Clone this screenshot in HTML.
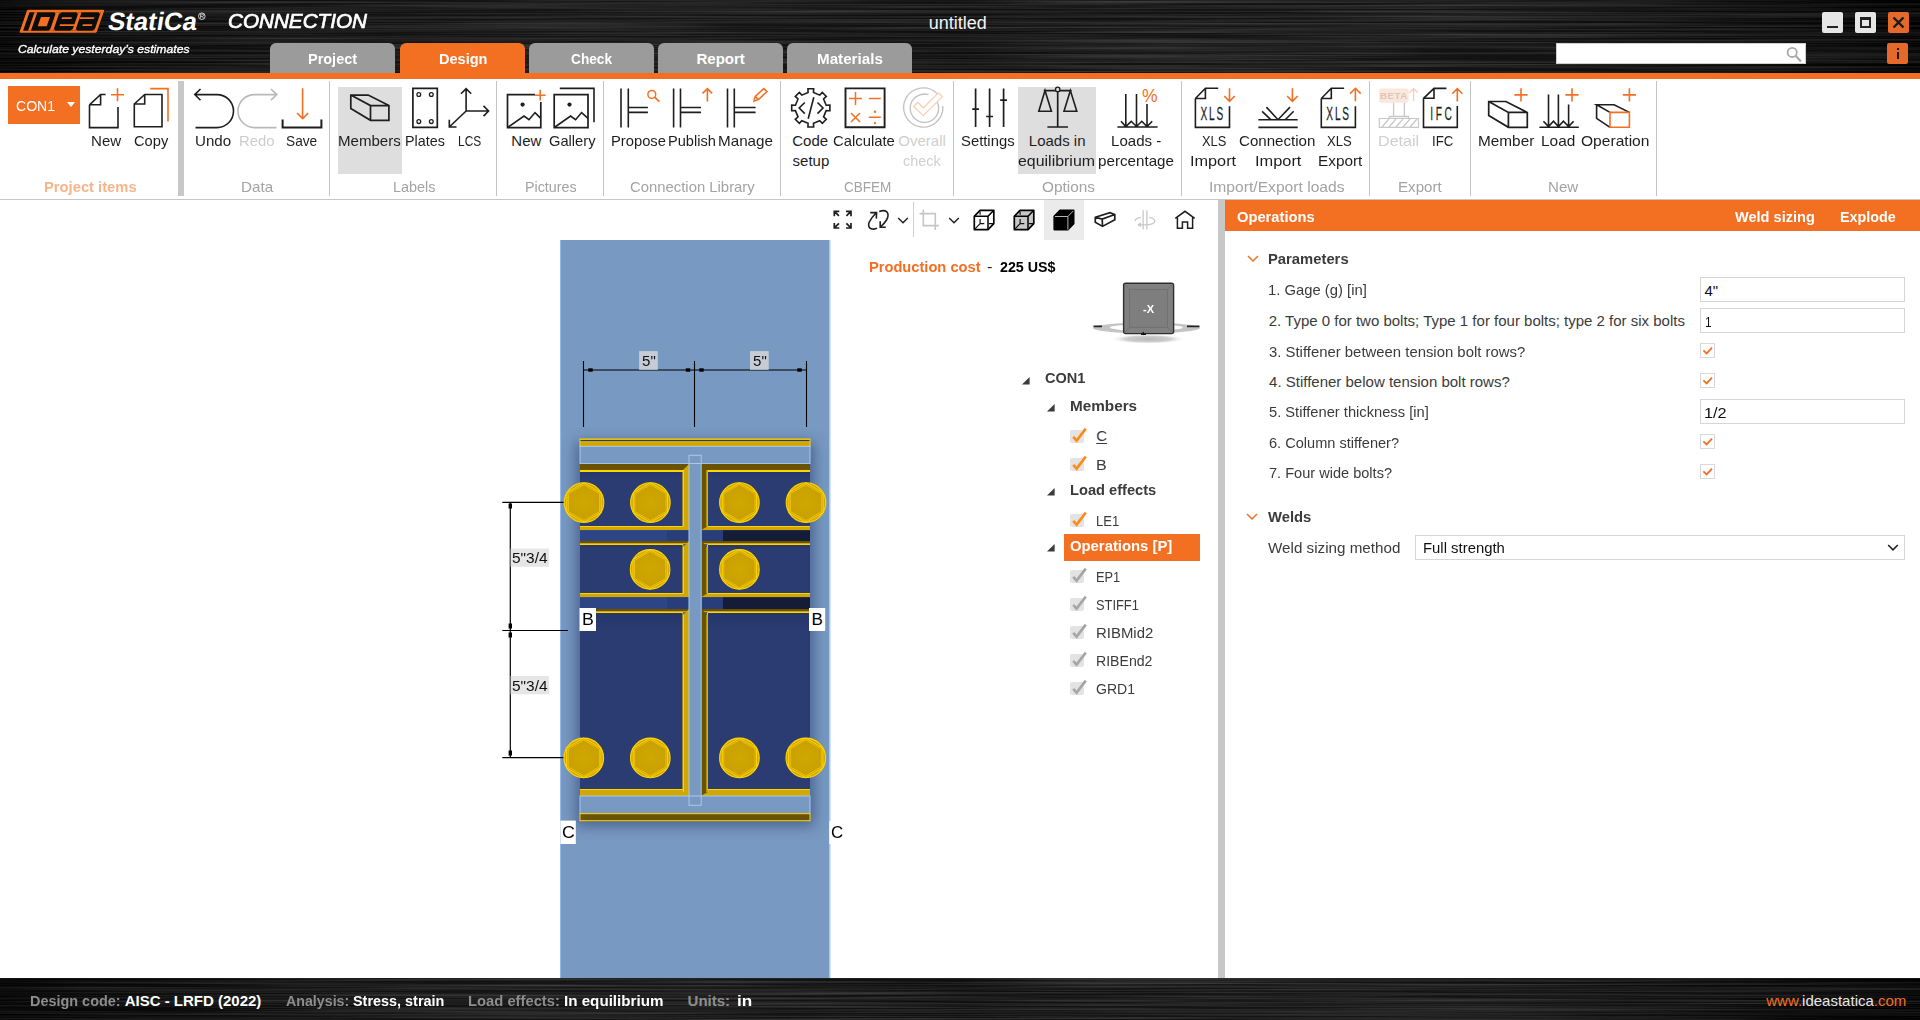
<!DOCTYPE html>
<html><head><meta charset="utf-8"><title>IDEA StatiCa Connection</title><style>
*{margin:0;padding:0;box-sizing:content-box}
html,body{width:1920px;height:1020px;overflow:hidden;background:#fff;font-family:"Liberation Sans",sans-serif;}
.a{position:absolute;display:block}
.t{position:absolute;white-space:nowrap;line-height:1;font-family:"Liberation Sans",sans-serif;}
</style></head><body>
<svg class="a" style="left:0px;top:0px;" width="1920" height="73" viewBox="0 0 1920 73"><defs><filter id="bh" x="0" y="0" width="1920" height="73" filterUnits="userSpaceOnUse" color-interpolation-filters="sRGB"><feTurbulence type="fractalNoise" baseFrequency="0.003 0.55" numOctaves="3" seed="3" result="n"/><feColorMatrix in="n" type="matrix" values="0.34 0 0 0 -0.11  0.34 0 0 0 -0.11  0.34 0 0 0 -0.11  0 0 0 0 1"/></filter><linearGradient id="bhg" x1="0" y1="0" x2="1" y2="0"><stop offset="0" stop-color="#000" stop-opacity="0.25"/><stop offset="0.5" stop-color="#fff" stop-opacity="0.05"/><stop offset="1" stop-color="#000" stop-opacity="0.25"/></linearGradient></defs><rect x="0" y="0" width="1920" height="73" fill="#111"/><rect x="0" y="0" width="1920" height="73" filter="url(#bh)"/><rect x="0" y="0" width="1920" height="73" fill="url(#bhg)"/></svg>
<svg class="a" style="left:0px;top:0px;" width="120" height="40" viewBox="0 0 120 40"><g transform="translate(0,32.8) skewX(-19.03) translate(0,-32.8)" fill="#f36f22">
      <rect x="19.3" y="9.8" width="77.2" height="23" rx="1.2"/>
      <rect x="22.4" y="12.2" width="71.2" height="18.5" fill="#0c0c0c" rx="0.5"/>
      <rect x="27.4" y="12.2" width="2.8" height="18.5"/>
      <rect x="35.5" y="16.9" width="9" height="9.4"/>
      <rect x="49" y="12.2" width="3.5" height="18.5"/>
      <path d="M47.5 12.2 L49.5 12.2 L49.5 14.2 Z M47.5 30.7 L49.5 30.7 L49.5 28.7 Z M52.5 12.2 L54.5 12.2 L52.5 14.2 Z M52.5 30.7 L54.5 30.7 L52.5 28.7 Z"/>
      <rect x="56.7" y="17.2" width="9.9" height="1.8"/>
      <rect x="57.1" y="24.2" width="15" height="1.8"/>
      <rect x="71.5" y="12.2" width="3" height="18.5"/>
      <path d="M69.5 12.2 L71.5 12.2 L71.5 14.2 Z M69.5 30.7 L71.5 30.7 L71.5 28.7 Z M74.5 30.7 L76.5 30.7 L74.5 28.7 Z M91.6 12.2 L93.6 12.2 L93.6 14.2 Z M91.6 30.7 L93.6 30.7 L93.6 28.7 Z"/>
      <rect x="74.5" y="17.2" width="14.5" height="1.8"/>
      <rect x="80" y="24.2" width="9.4" height="1.8"/>
    </g></svg>
<div class="t" style="left:107.23px;top:8.88px;font-size:25.2px;color:#fff;font-weight:700;transform:scaleX(1.0219) skewX(-9deg);transform-origin:0 21.42px;">StatiCa</div>
<svg class="a" style="left:196px;top:10px;" width="12" height="12" viewBox="196 10 12 12"><circle cx="201.8" cy="16.2" r="3.3" fill="none" stroke="#e0e0e0" stroke-width="0.9"/><path d="M200.6 18.3 L200.6 14.2 L202.4 14.2 Q203.6 14.2 203.6 15.3 Q203.6 16.3 202.4 16.3 L200.6 16.3 M202.2 16.3 L203.6 18.3" fill="none" stroke="#e0e0e0" stroke-width="0.8"/></svg>
<div class="t" style="left:227.86px;top:11.54px;font-size:19.6px;color:#fff;font-style:italic;transform:scaleX(1.0548);transform-origin:0 16.66px;-webkit-text-stroke:0.7px #fff;">CONNECTION</div>
<div class="t" style="left:18.33px;top:43.83px;font-size:11.5px;color:#fff;font-style:italic;transform:scaleX(1.0625);transform-origin:0 9.78px;-webkit-text-stroke:0.35px #fff;">Calculate yesterday’s estimates</div>
<div class="t" style="left:957.8px;top:13.6px;font-size:18px;color:#f2f2f2;transform:translateX(-50%);">untitled</div>
<div class="a" style="left:270px;top:43px;width:125px;height:30px;background:#9b9b9b;border-radius:6px 6px 0 0;"></div>
<div class="t" style="left:307.66px;top:51.35px;font-size:15px;color:#fff;font-weight:700;transform:scaleX(0.9648);transform-origin:0 12.75px;">Project</div>
<div class="a" style="left:400px;top:43px;width:125px;height:30px;background:#f36f22;border-radius:6px 6px 0 0;"></div>
<div class="t" style="left:438.76px;top:51.35px;font-size:15px;color:#fff;font-weight:700;transform:scaleX(0.9678);transform-origin:0 12.75px;">Design</div>
<div class="a" style="left:529px;top:43px;width:125px;height:30px;background:#9b9b9b;border-radius:6px 6px 0 0;"></div>
<div class="t" style="left:570.70px;top:51.35px;font-size:15px;color:#fff;font-weight:700;transform:scaleX(0.9122);transform-origin:0 12.75px;">Check</div>
<div class="a" style="left:658px;top:43px;width:125px;height:30px;background:#9b9b9b;border-radius:6px 6px 0 0;"></div>
<div class="t" style="left:696.53px;top:51.35px;font-size:15px;color:#fff;font-weight:700;">Report</div>
<div class="a" style="left:787px;top:43px;width:125px;height:30px;background:#9b9b9b;border-radius:6px 6px 0 0;"></div>
<div class="t" style="left:816.51px;top:51.35px;font-size:15px;color:#fff;font-weight:700;transform:scaleX(1.0126);transform-origin:0 12.75px;">Materials</div>
<div class="a" style="left:1822px;top:12px;width:21px;height:21px;background:#e6e6e6;border-radius:2px;"></div>
<div class="a" style="left:1827px;top:26px;width:11px;height:2px;background:#222;"></div>
<div class="a" style="left:1855px;top:12px;width:21px;height:21px;background:#e6e6e6;border-radius:2px;"></div>
<div class="a" style="left:1860px;top:17px;width:11px;height:11px;background:transparent;box-sizing:border-box;border:2px solid #222;border-top-width:3px;"></div>
<div class="a" style="left:1888px;top:12px;width:21px;height:21px;background:#e5692a;border-radius:2px;"></div>
<svg class="a" style="left:1888px;top:12px;" width="21" height="21" viewBox="1888 12 21 21"><path d="M1893.5 17.5 L1903.5 27.5 M1903.5 17.5 L1893.5 27.5" stroke="#1a1a1a" stroke-width="2.4"/></svg>
<div class="a" style="left:1556px;top:43px;width:250px;height:21px;background:#fff;box-sizing:border-box;border:1px solid #cfcfcf;"></div>
<svg class="a" style="left:1782px;top:44px;" width="22" height="20" viewBox="1782 44 22 20"><circle cx="1792.2" cy="52.4" r="4.6" fill="none" stroke="#aaa" stroke-width="1.8"/><path d="M1795.6 55.8 L1801 61.5" stroke="#aaa" stroke-width="2.2"/></svg>
<div class="a" style="left:1887px;top:43px;width:21px;height:21px;background:#e5692a;border-radius:2px;"></div>
<div class="a" style="left:1896.5px;top:48px;width:2.2px;height:2.2px;background:#1a1a1a;"></div>
<div class="a" style="left:1896.5px;top:51.5px;width:2.2px;height:7.5px;background:#1a1a1a;"></div>
<div class="a" style="left:0px;top:73px;width:1920px;height:6px;background:#f36f22;"></div>
<div class="a" style="left:0px;top:79px;width:1920px;height:120px;background:#fff;"></div>
<div class="a" style="left:0px;top:199px;width:1920px;height:1px;background:#c6c6c6;"></div>
<div class="a" style="left:178px;top:81px;width:6px;height:115px;background:#c8c8c8;"></div>
<div class="a" style="left:329px;top:81px;width:1px;height:115px;background:#c4c4c4;"></div>
<div class="a" style="left:496px;top:81px;width:1px;height:115px;background:#c4c4c4;"></div>
<div class="a" style="left:603px;top:81px;width:1px;height:115px;background:#c4c4c4;"></div>
<div class="a" style="left:780px;top:81px;width:1px;height:115px;background:#c4c4c4;"></div>
<div class="a" style="left:953px;top:81px;width:1px;height:115px;background:#c4c4c4;"></div>
<div class="a" style="left:1181px;top:81px;width:1px;height:115px;background:#c4c4c4;"></div>
<div class="a" style="left:1369px;top:81px;width:1px;height:115px;background:#c4c4c4;"></div>
<div class="a" style="left:1470px;top:81px;width:1px;height:115px;background:#c4c4c4;"></div>
<div class="a" style="left:1656px;top:81px;width:1px;height:115px;background:#c4c4c4;"></div>
<div class="a" style="left:338px;top:87px;width:64px;height:87px;background:#dedede;"></div>
<div class="a" style="left:1018px;top:87px;width:78px;height:87px;background:#dedede;"></div>
<div class="a" style="left:8px;top:86px;width:72px;height:38px;background:#f36f22;"></div>
<div class="t" style="left:15.60px;top:97.55px;font-size:15px;color:#fff;transform:scaleX(0.9378);transform-origin:0 12.75px;">CON1</div>
<svg class="a" style="left:66px;top:100px;" width="10" height="8" viewBox="66 100 10 8"><path d="M67 102 L75 102 L71 107 Z" fill="#fff"/></svg>
<div class="t" style="left:91.49px;top:132.85px;font-size:15px;color:#1e1e1e;transform:scaleX(1.0043);transform-origin:0 12.75px;">New</div>
<div class="t" style="left:133.77px;top:132.85px;font-size:15px;color:#1e1e1e;transform:scaleX(0.9774);transform-origin:0 12.75px;">Copy</div>
<div class="t" style="left:195.47px;top:132.85px;font-size:15px;color:#1e1e1e;transform:scaleX(1.0081);transform-origin:0 12.75px;">Undo</div>
<div class="t" style="left:239.41px;top:132.85px;font-size:15px;color:#cdcdcd;transform:scaleX(0.9897);transform-origin:0 12.75px;">Redo</div>
<div class="t" style="left:285.78px;top:132.85px;font-size:15px;color:#1e1e1e;transform:scaleX(0.9132);transform-origin:0 12.75px;">Save</div>
<div class="t" style="left:338.39px;top:132.85px;font-size:15px;color:#1e1e1e;transform:scaleX(1.0045);transform-origin:0 12.75px;">Members</div>
<div class="t" style="left:405.35px;top:132.85px;font-size:15px;color:#1e1e1e;transform:scaleX(0.9556);transform-origin:0 12.75px;">Plates</div>
<div class="t" style="left:457.75px;top:132.85px;font-size:15px;color:#1e1e1e;transform:scaleX(0.7949);transform-origin:0 12.75px;">LCS</div>
<div class="t" style="left:511.30px;top:132.85px;font-size:15px;color:#1e1e1e;">New</div>
<div class="t" style="left:549.27px;top:132.85px;font-size:15px;color:#1e1e1e;transform:scaleX(0.9786);transform-origin:0 12.75px;">Gallery</div>
<div class="t" style="left:611.22px;top:132.85px;font-size:15px;color:#1e1e1e;transform:scaleX(0.9833);transform-origin:0 12.75px;">Propose</div>
<div class="t" style="left:668.23px;top:132.85px;font-size:15px;color:#1e1e1e;transform:scaleX(0.9740);transform-origin:0 12.75px;">Publish</div>
<div class="t" style="left:718.38px;top:132.85px;font-size:15px;color:#1e1e1e;transform:scaleX(1.0143);transform-origin:0 12.75px;">Manage</div>
<div class="t" style="left:792.25px;top:132.85px;font-size:15px;color:#1e1e1e;">Code</div>
<div class="t" style="left:792.55px;top:152.65px;font-size:15px;color:#1e1e1e;">setup</div>
<div class="t" style="left:833.26px;top:132.85px;font-size:15px;color:#1e1e1e;transform:scaleX(0.9881);transform-origin:0 12.75px;">Calculate</div>
<div class="t" style="left:898.32px;top:132.85px;font-size:15px;color:#cfcfcf;">Overall</div>
<div class="t" style="left:903.42px;top:152.65px;font-size:15px;color:#cfcfcf;transform:scaleX(0.9598);transform-origin:0 12.75px;">check</div>
<div class="t" style="left:961.33px;top:132.85px;font-size:15px;color:#1e1e1e;transform:scaleX(0.9882);transform-origin:0 12.75px;">Settings</div>
<div class="t" style="left:1028.80px;top:132.85px;font-size:15px;color:#1e1e1e;">Loads in</div>
<div class="t" style="left:1018.36px;top:152.65px;font-size:15px;color:#1e1e1e;transform:scaleX(1.0616);transform-origin:0 12.75px;">equilibrium</div>
<div class="t" style="left:1110.79px;top:132.85px;font-size:15px;color:#1e1e1e;transform:scaleX(1.0057);transform-origin:0 12.75px;">Loads -</div>
<div class="t" style="left:1098.01px;top:152.65px;font-size:15px;color:#1e1e1e;transform:scaleX(1.0119);transform-origin:0 12.75px;">percentage</div>
<div class="t" style="left:1201.68px;top:132.85px;font-size:15px;color:#1e1e1e;transform:scaleX(0.8571);transform-origin:0 12.75px;">XLS</div>
<div class="t" style="left:1190.44px;top:152.65px;font-size:15px;color:#1e1e1e;transform:scaleX(1.0847);transform-origin:0 12.75px;">Import</div>
<div class="t" style="left:1239.24px;top:132.85px;font-size:15px;color:#1e1e1e;transform:scaleX(1.0071);transform-origin:0 12.75px;">Connection</div>
<div class="t" style="left:1254.53px;top:152.65px;font-size:15px;color:#1e1e1e;transform:scaleX(1.0920);transform-origin:0 12.75px;">Import</div>
<div class="t" style="left:1327.37px;top:132.85px;font-size:15px;color:#1e1e1e;transform:scaleX(0.8718);transform-origin:0 12.75px;">XLS</div>
<div class="t" style="left:1317.77px;top:152.65px;font-size:15px;color:#1e1e1e;transform:scaleX(1.0238);transform-origin:0 12.75px;">Export</div>
<div class="t" style="left:1378.21px;top:132.85px;font-size:15px;color:#cfcfcf;transform:scaleX(1.0733);transform-origin:0 12.75px;">Detail</div>
<div class="t" style="left:1431.81px;top:132.85px;font-size:15px;color:#1e1e1e;transform:scaleX(0.8844);transform-origin:0 12.75px;">IFC</div>
<div class="t" style="left:1478.37px;top:132.85px;font-size:15px;color:#1e1e1e;transform:scaleX(1.0233);transform-origin:0 12.75px;">Member</div>
<div class="t" style="left:1541.07px;top:132.85px;font-size:15px;color:#1e1e1e;transform:scaleX(1.0288);transform-origin:0 12.75px;">Load</div>
<div class="t" style="left:1581.30px;top:132.85px;font-size:15px;color:#1e1e1e;transform:scaleX(1.0389);transform-origin:0 12.75px;">Operation</div>
<div class="t" style="left:43.64px;top:178.65px;font-size:15px;color:#f6b48a;font-weight:700;transform:scaleX(0.9835);transform-origin:0 12.75px;">Project items</div>
<div class="t" style="left:241.28px;top:178.65px;font-size:15px;color:#a3a3a3;transform:scaleX(1.0148);transform-origin:0 12.75px;">Data</div>
<div class="t" style="left:392.55px;top:178.65px;font-size:15px;color:#a3a3a3;transform:scaleX(0.9611);transform-origin:0 12.75px;">Labels</div>
<div class="t" style="left:524.86px;top:178.65px;font-size:15px;color:#a3a3a3;transform:scaleX(0.9537);transform-origin:0 12.75px;">Pictures</div>
<div class="t" style="left:630.26px;top:178.65px;font-size:15px;color:#a3a3a3;transform:scaleX(0.9906);transform-origin:0 12.75px;">Connection Library</div>
<div class="t" style="left:844.32px;top:178.65px;font-size:15px;color:#a3a3a3;transform:scaleX(0.9014);transform-origin:0 12.75px;">CBFEM</div>
<div class="t" style="left:1041.61px;top:178.65px;font-size:15px;color:#a3a3a3;transform:scaleX(1.0243);transform-origin:0 12.75px;">Options</div>
<div class="t" style="left:1208.59px;top:178.65px;font-size:15px;color:#a3a3a3;transform:scaleX(1.0423);transform-origin:0 12.75px;">Import/Export loads</div>
<div class="t" style="left:1398.19px;top:178.65px;font-size:15px;color:#a3a3a3;transform:scaleX(1.0071);transform-origin:0 12.75px;">Export</div>
<div class="t" style="left:1548.39px;top:178.65px;font-size:15px;color:#a3a3a3;transform:scaleX(1.0078);transform-origin:0 12.75px;">New</div>
<svg class="a" style="left:0px;top:79px;" width="1920" height="60" viewBox="0 79 1920 60"><path d="M89.5 104.8 L100.6 94.5 L105.6 94.5 M89.5 104.8 L89.5 127.6 L118 127.6 L118 107 M89.5 104.8 L100.6 104.8 L100.6 94.5" fill="none" stroke="#1e1e1e" stroke-width="1.6" /><path d="M111 94.8 L124 94.8 M117.5 88.3 L117.5 101.3" fill="none" stroke="#f36f22" stroke-width="1.6" /><path d="M134.3 104 L144.7 94.5 L162 94.5 L162 126.8 L134.3 126.8 Z M134.3 104 L144.7 104 L144.7 94.5" fill="none" stroke="#1e1e1e" stroke-width="1.6" /><path d="M150.2 88.6 L168 88.6 L168 121.6" fill="none" stroke="#f36f22" stroke-width="1.6" /><path d="M194.8 94.6 L217 94.6 A16.5 16.5 0 0 1 217 127.6 L195.5 127.6 M200.5 89 L194.8 94.6 L200.5 100.2" fill="none" stroke="#1e1e1e" stroke-width="1.6" /><path d="M276.8 94.6 L254.5 94.6 A16.5 16.5 0 0 0 254.5 127.6 L276.5 127.6 M271 89 L276.8 94.6 L271 100.2" fill="none" stroke="#b9b9b9" stroke-width="1.6" /><path d="M302.6 88.2 L302.6 118.6 M297 113 L302.6 118.6 L308.2 113" fill="none" stroke="#f36f22" stroke-width="1.6" /><path d="M282.6 119.5 L282.6 127.5 L321.4 127.5 L321.4 119.5" fill="none" stroke="#1e1e1e" stroke-width="2" /><path d="M350.8 95.1 L368.2 95.1 L388.9 105.6 L388.9 120.3 L370.5 120.3 L350.8 108.5 Z M350.8 95.1 L370.5 105.6 L388.9 105.6 M370.5 105.6 L370.5 120.3" fill="none" stroke="#1e1e1e" stroke-width="1.7" /><path d="M412.9 88.4 L437.3 88.4 L437.3 127.4 L412.9 127.4 Z" fill="none" stroke="#1e1e1e" stroke-width="1.7" /><circle cx="418.8" cy="94.5" r="1.9" fill="none" stroke="#1e1e1e" stroke-width="1.3"/><circle cx="418.8" cy="121.6" r="1.9" fill="none" stroke="#1e1e1e" stroke-width="1.3"/><circle cx="431.3" cy="94.5" r="1.9" fill="none" stroke="#1e1e1e" stroke-width="1.3"/><circle cx="431.3" cy="121.6" r="1.9" fill="none" stroke="#1e1e1e" stroke-width="1.3"/><path d="M466.1 111 L466.1 88.6 M461 93.7 L466.1 88.6 L471.2 93.7 M466.1 111 L488.6 111 M483.5 105.9 L488.6 111 L483.5 116.1 M466.1 111 L449.3 127 M449.3 119.8 L449.3 127 L456.5 127" fill="none" stroke="#1e1e1e" stroke-width="1.6" /><path d="M535 94.6 L507.5 94.6 L507.5 127.6 L540.8 127.6 L540.8 102" fill="none" stroke="#1e1e1e" stroke-width="1.7" /><path d="M534.8 95.2 L545.6 95.2 M540.2 89.8 L540.2 100.6" fill="none" stroke="#f36f22" stroke-width="1.6" /><circle cx="522.6" cy="104.6" r="2.1" fill="#1e1e1e"/><path d="M508.2 127 L524 116 L529 119.7 L535 112.6 L540.8 118.4" fill="none" stroke="#1e1e1e" stroke-width="1.6" /><path d="M559.8 88.4 L594 88.4 L594 122.2" fill="none" stroke="#1e1e1e" stroke-width="1.6" /><path d="M554.2 94.6 L588 94.6 L588 127.6 L554.2 127.6 Z" fill="none" stroke="#1e1e1e" stroke-width="1.7" /><circle cx="569.5" cy="104.6" r="2.1" fill="#1e1e1e"/><path d="M555 127 L570.6 116 L575.6 119.7 L581.6 112.6 L588 118.4" fill="none" stroke="#1e1e1e" stroke-width="1.6" /><path d="M621 88.4 L621 127.6 M628.3 88.4 L628.3 127.6 M628.3 107.5 L647.9 107.5 M628.3 112.4 L647.9 112.4" fill="none" stroke="#1e1e1e" stroke-width="1.6" /><path d="M673.6 88.4 L673.6 127.6 M680.5 88.4 L680.5 127.6 M680.5 107.5 L701 107.5 M680.5 112.4 L701 112.4" fill="none" stroke="#1e1e1e" stroke-width="1.6" /><path d="M727.5 88.4 L727.5 127.6 M734.3 88.4 L734.3 127.6 M734.3 107.5 L755.6 107.5 M734.3 112.4 L755.6 112.4" fill="none" stroke="#1e1e1e" stroke-width="1.6" /><circle cx="651.8" cy="94.4" r="3.9" fill="none" stroke="#f36f22" stroke-width="1.5"/><path d="M654.6 97.2 L659.4 101.6" fill="none" stroke="#f36f22" stroke-width="1.7" /><path d="M707.4 101.6 L707.4 88.6 M702.6 93.4 L707.4 88.6 L712.2 93.4" fill="none" stroke="#f36f22" stroke-width="1.6" /><path d="M754 101 L755.2 96.4 L763.8 88.6 L767 91.6 L758.4 99.6 Z M755.2 96.4 L758.4 99.6" fill="none" stroke="#f36f22" stroke-width="1.5" /><path d="M808.09 92.54 L807.95 88.81 L813.65 88.81 L813.51 92.54 L819.75 95.12 L822.28 92.39 L826.31 96.42 L823.58 98.95 L826.16 105.19 L829.89 105.05 L829.89 110.75 L826.16 110.61 L823.58 116.85 L826.31 119.38 L822.28 123.41 L819.75 120.68 L813.51 123.26 L813.65 126.99 L807.95 126.99 L808.09 123.26 L801.85 120.68 L799.32 123.41 L795.29 119.38 L798.02 116.85 L795.44 110.61 L791.71 110.75 L791.71 105.05 L795.44 105.19 L798.02 98.95 L795.29 96.42 L799.32 92.39 L801.85 95.12 Z" fill="none" stroke="#1e1e1e" stroke-width="1.6" /><path d="M804.8 102.5 L799.2 108 L804.8 113.6 M813.8 97.3 L808.2 118.8 M817.5 102.5 L823 108 L817.5 113.6" fill="none" stroke="#1e1e1e" stroke-width="1.6" /><path d="M845.5 88.4 L884.6 88.4 L884.6 127.3 L845.5 127.3 Z" fill="none" stroke="#1e1e1e" stroke-width="1.9" /><path d="M849 98.6 L862 98.6 M855.5 92.1 L855.5 105.1 M868.8 98.6 L880.8 98.6 M851 113 L860 122 M860 113 L851 122 M868.8 117.3 L880.8 117.3" fill="none" stroke="#f36f22" stroke-width="1.5" /><circle cx="875" cy="111.7" r="1.2" fill="#f36f22"/><circle cx="875" cy="123.1" r="1.2" fill="#f36f22"/><path d="M937 93.5 A19.6 19.6 0 1 0 942.8 106" fill="none" stroke="#c4c4c4" stroke-width="1.4"/><path d="M928.5 94.6 A14.2 14.2 0 1 0 937.2 102" fill="none" stroke="#c4c4c4" stroke-width="1.4"/><path d="M913.5 106.4 L917.8 102.5 L923.3 107.8 L938.4 92.8 L942.3 96.6 L923.3 115.6 Z" fill="none" stroke="#f8cfb5" stroke-width="1.3"/><path d="M975.6 88.6 L975.6 127 M989.6 88.6 L989.6 127 M1003.6 88.6 L1003.6 127 M972.2 109.2 L979 109.2 M986.2 116.5 L993 116.5 M1000.2 100.2 L1007 100.2" fill="none" stroke="#1e1e1e" stroke-width="1.7" /><path d="M1057.7 90.4 L1057.7 127 M1047.4 127 L1068 127 M1043.8 90.6 L1071.6 90.6" fill="none" stroke="#1e1e1e" stroke-width="1.7" /><circle cx="1057.7" cy="89.4" r="2.2" fill="#dedede" stroke="#1e1e1e" stroke-width="1.3"/><path d="M1045 90.6 L1038.8 111.2 L1051.4 111.2 Z M1070.4 90.6 L1064 111.2 L1076.8 111.2 Z" fill="none" stroke="#1e1e1e" stroke-width="1.6" /><path d="M1117.4 127 L1157.6 127 M1125.8 94 L1125.8 127 M1136.5 94 L1136.5 127 M1147 104 L1147 127 M1121 121.3 L1125.8 126.5 L1131.2 121.3 L1136.5 126.5 L1141.8 121.3 L1147 126.5 L1152.2 121.3" fill="none" stroke="#1e1e1e" stroke-width="1.6" /><text x="1149.8" y="101.6" font-size="17.5" font-family="Liberation Sans" fill="#f36f22" text-anchor="middle">%</text><path d="M1195.4 98.5 L1205.4 88.3 L1218.2 88.3 M1195.4 98.5 L1195.4 127.4 L1229.5 127.4 L1229.5 106.2 M1195.4 98.5 L1205.4 98.5 L1205.4 88.3" fill="none" stroke="#1e1e1e" stroke-width="1.6" /><text x="1213.0" y="120.3" font-size="18" font-family="Liberation Sans" fill="#1e1e1e" text-anchor="middle" transform="translate(1212.5,0) scale(0.56,1) translate(-1212.5,0)" letter-spacing="3.2" stroke="#1e1e1e" stroke-width="0.25">XLS</text><path d="M1229.5 88.3 L1229.5 101.3 M1224.2 96 L1229.5 101.3 L1234.8 96" fill="none" stroke="#f36f22" stroke-width="1.6" /><path d="M1321.3 98.5 L1331.3 88.3 L1344.1 88.3 M1321.3 98.5 L1321.3 127.4 L1355.4 127.4 L1355.4 106.2 M1321.3 98.5 L1331.3 98.5 L1331.3 88.3" fill="none" stroke="#1e1e1e" stroke-width="1.6" /><text x="1338.8" y="120.3" font-size="18" font-family="Liberation Sans" fill="#1e1e1e" text-anchor="middle" transform="translate(1338.3,0) scale(0.56,1) translate(-1338.3,0)" letter-spacing="3.2" stroke="#1e1e1e" stroke-width="0.25">XLS</text><path d="M1355.4 101.3 L1355.4 88.3 M1350.1 93.6 L1355.4 88.3 L1360.7 93.6" fill="none" stroke="#f36f22" stroke-width="1.6" /><path d="M1258.4 119.7 L1297.7 119.7 M1258.4 127.4 L1297.7 127.4 M1262.1 111.3 L1270.8 119.7 M1266.4 107.1 L1278 119.7 L1290 107.1 M1285.2 119.7 L1293.7 111.3" fill="none" stroke="#1e1e1e" stroke-width="1.6" /><path d="M1292.4 88.3 L1292.4 101.3 M1287.1 96 L1292.4 101.3 L1297.7 96" fill="none" stroke="#f36f22" stroke-width="1.6" /><rect x="1379" y="88.4" width="29.7" height="14.3" rx="2.5" fill="#fbe8dc"/><text x="1393.9" y="99.4" font-size="9.6" font-weight="700" font-family="Liberation Sans" fill="#dcc6b8" text-anchor="middle" letter-spacing="0.6">BETA</text><path d="M1413.6 101.3 L1413.6 88.6 M1409.4 92.8 L1413.6 88.6 L1417.8 92.8" fill="none" stroke="#f8cdb3" stroke-width="1.3" /><path d="M1393.6 102.7 L1393.6 116 M1404.4 102.7 L1404.4 116 M1389.2 116.5 L1408.5 116.5 L1408.5 118.3 M1389.2 116.5 L1389.2 118.3" fill="none" stroke="#c8c8c8" stroke-width="1.3" /><path d="M1379.3 118.5 L1418.5 118.5 L1418.5 127.4 L1379.3 127.4 Z M1382 127 L1389 119 M1389 127 L1396 119 M1396 127 L1403 119 M1403 127 L1410 119 M1410 127 L1417 119" fill="none" stroke="#c8c8c8" stroke-width="1.2" /><path d="M1423.5 98.3 L1434 88.4 L1446.4 88.4 M1423.5 98.3 L1423.5 127.4 L1457.3 127.4 L1457.3 105.9 M1423.5 98.3 L1434 98.3 L1434 88.4" fill="none" stroke="#1e1e1e" stroke-width="1.6" /><text x="1442.4" y="119.8" font-size="17.5" font-family="Liberation Sans" fill="#1e1e1e" text-anchor="middle" transform="translate(1442.4,0) scale(0.58,1) translate(-1442.4,0)" letter-spacing="4.5" stroke="#1e1e1e" stroke-width="0.25">IFC</text><path d="M1457.3 101.5 L1457.3 88.6 M1452.2 93.7 L1457.3 88.6 L1462.4 93.7" fill="none" stroke="#f36f22" stroke-width="1.6" /><path d="M1488.7 101.5 L1505.9 101.5 L1527.3 112.4 L1527.3 127.3 L1508.4 127.3 L1488.7 115.4 Z M1488.7 101.5 L1508.4 112.4 L1527.3 112.4 M1508.4 112.4 L1508.4 127.3" fill="none" stroke="#1e1e1e" stroke-width="1.7" /><path d="M1514.4 94.9 L1527.6 94.9 M1521 88.3 L1521 101.5" fill="none" stroke="#f36f22" stroke-width="1.6" /><path d="M1539.4 127.3 L1578.8 127.3 M1548.5 94.5 L1548.5 127 M1558.4 94.5 L1558.4 127 M1568.6 104.4 L1568.6 127 M1543.4 121.2 L1548.5 126.6 L1553.5 121.2 L1558.4 126.6 L1563.4 121.2 L1568.6 126.6 L1573.6 121.2" fill="none" stroke="#1e1e1e" stroke-width="1.6" /><path d="M1565.4 94.9 L1578.6 94.9 M1572 88.3 L1572 101.5" fill="none" stroke="#f36f22" stroke-width="1.6" /><path d="M1610 112.4 L1596.6 104.7 L1614.1 104.7 L1629.4 112.4 M1596.6 104.7 L1596.6 118.3 L1610 127.3" fill="none" stroke="#1e1e1e" stroke-width="1.6" /><path d="M1610 112.4 L1629.4 112.4 L1629.4 127.3 L1610 127.3 Z" fill="none" stroke="#f36f22" stroke-width="1.6" /><path d="M1622.8 94.9 L1636 94.9 M1629.4 88.3 L1629.4 101.5" fill="none" stroke="#f36f22" stroke-width="1.6" /></svg>
<svg class="a" style="left:820px;top:200px;" width="400" height="40" viewBox="820 200 400 40"><rect x="1044" y="200" width="40" height="40" fill="#ebebeb"/><path d="M834.3 216.3 L834.3 211.3 L839.3 211.3 M834.6 211.6 L838.9 215.9 M851 216.3 L851 211.3 L846 211.3 M850.7 211.6 L846.4 215.9 M834.3 223 L834.3 228 L839.3 228 M834.6 227.7 L838.9 223.4 M851 223 L851 228 L846 228 M850.7 227.7 L846.4 223.4" fill="none" stroke="#1e1e1e" stroke-width="1.7"/><path d="M876.3 212.8 Q871 218 869 222.5 Q867.5 228 872 229 Q875 229.5 877 228.2 M870.2 212.6 L876.6 212.6 L876.3 218.6" fill="none" stroke="#1e1e1e" stroke-width="1.6"/><path d="M879.2 211.6 Q884 209.5 886.8 211.8 Q889.5 215 886.5 220 Q884 224 880.4 227 M880.2 221.2 L880.2 227.2 L885.8 227.2" fill="none" stroke="#1e1e1e" stroke-width="1.6"/><path d="M898.2 218 L903 222.8 L907.8 218" fill="none" stroke="#1e1e1e" stroke-width="1.4"/><rect x="913" y="202" width="1" height="35" fill="#d0d0d0"/><path d="M919.5 213.6 L935.3 213.6 L935.3 229.9 M923.3 209.6 L923.3 225.6 L939 225.6" fill="none" stroke="#c6c6c6" stroke-width="1.6"/><path d="M949.2 218 L954 222.8 L958.8 218" fill="none" stroke="#1e1e1e" stroke-width="1.4"/><path d="M974.3 216.3 L980.0999999999999 210.3 L993.8 210.3 L993.8 223.60000000000002 L988.0 229.60000000000002 L974.3 229.60000000000002 Z" fill="none" stroke="#000" stroke-width="1.7" stroke-linejoin="round"/><path d="M974.3 216.3 L988.0 216.3 L988.0 229.60000000000002 M988.0 216.3 L993.8 210.3" fill="none" stroke="#000" stroke-width="1.5"/><path d="M980.0999999999999 211.8 L980.0999999999999 214.8 M980.0999999999999 218.9 L980.0999999999999 223.60000000000002 L984.3 223.60000000000002 M988.8 223.60000000000002 L993.8 223.60000000000002 M974.3 229.60000000000002 L980.0999999999999 223.60000000000002" fill="none" stroke="#111" stroke-width="1.2"/><path d="M1014.3 216.3 L1020.0999999999999 210.3 L1033.8 210.3 L1033.8 223.60000000000002 L1028.0 229.60000000000002 L1014.3 229.60000000000002 Z" fill="#c8c8c8" stroke="#000" stroke-width="1.7" stroke-linejoin="round"/><path d="M1014.3 216.3 L1028.0 216.3 L1028.0 229.60000000000002 M1028.0 216.3 L1033.8 210.3" fill="none" stroke="#000" stroke-width="1.5"/><path d="M1020.0999999999999 211.8 L1020.0999999999999 214.8 M1020.0999999999999 218.9 L1020.0999999999999 223.60000000000002 L1024.3 223.60000000000002 M1028.8 223.60000000000002 L1033.8 223.60000000000002 M1014.3 229.60000000000002 L1020.0999999999999 223.60000000000002" fill="none" stroke="#111" stroke-width="1.2"/><path d="M1054.2 216.3 L1060.0 210.3 L1073.7 210.3 L1073.7 223.60000000000002 L1067.9 229.60000000000002 L1054.2 229.60000000000002 Z" fill="#000" stroke="#000" stroke-width="1.6" stroke-linejoin="round"/><path d="M1055.0 216.5 L1067.9 216.5 L1067.9 229.60000000000002 M1067.9 216.5 L1073.3 210.9" fill="none" stroke="#c8c8c8" stroke-width="0.9"/><path d="M1095.3 217.3 L1110 212.6 L1114.8 214.5 L1114.8 219.8 L1102.5 226.4 L1095.3 222.3 Z M1095.3 217.3 L1102.2 219 L1114.8 214.5 M1102.2 219 L1102.5 226.4" fill="none" stroke="#1e1e1e" stroke-width="1.7"/><path d="M1143.1 210.2 L1143.1 229.6 M1146.9 210.2 L1146.9 229.6 M1140.8 217.3 Q1135 218.5 1135 221 M1149.2 217.3 Q1154.8 218.5 1154.8 221 Q1154.8 224.8 1145 224.8 L1138 224.8" fill="none" stroke="#c8c8c8" stroke-width="1.3"/><path d="M1137.3 224.8 L1140.8 222.3 L1140.8 227.3 Z" fill="#c8c8c8"/><path d="M1175.3 218.4 L1185 211.3 L1194.7 218.4 M1177.4 217 L1177.4 228.3 L1182.4 228.3 L1182.4 222 L1187.6 222 L1187.6 228.3 L1192.6 228.3 L1192.6 217" fill="none" stroke="#1e1e1e" stroke-width="1.5"/></svg>
<div class="t" style="left:869.45px;top:259.15px;font-size:15px;color:#f36f22;font-weight:700;transform:scaleX(0.9768);transform-origin:0 12.75px;">Production cost</div>
<div class="t" style="left:987.27px;top:259.15px;font-size:15px;color:#222;transform:scaleX(1.0884);transform-origin:0 12.75px;">-</div>
<div class="t" style="left:999.50px;top:259.15px;font-size:15px;color:#000;font-weight:700;transform:scaleX(0.9514);transform-origin:0 12.75px;">225 US$</div>
<svg class="a" style="left:1085px;top:275px;" width="125" height="75" viewBox="1085 275 125 75">
    <defs><radialGradient id="shd" cx="50%" cy="50%" r="50%"><stop offset="0" stop-color="#b8b8b8"/><stop offset="0.6" stop-color="#cfcfcf"/><stop offset="1" stop-color="#fff" stop-opacity="0"/></radialGradient></defs>
    <ellipse cx="1148" cy="339" rx="38" ry="5" fill="url(#shd)"/>
    <ellipse cx="1146.4" cy="328" rx="53.5" ry="5.3" fill="#c4c4c4"/>
    <ellipse cx="1146.4" cy="327.6" rx="36.5" ry="3.3" fill="#fff"/>
    <path d="M1093.5 326.4 L1102 326.4 M1187 326.4 L1199.5 326.4" stroke="#222" stroke-width="1.6"/>
    <rect x="1123.6" y="283.3" width="50" height="50.3" rx="2" fill="#808080" stroke="#2e2e2e" stroke-width="1.4"/>
    <rect x="1129.6" y="289.3" width="38" height="38" fill="#7e7e7e" stroke="#6e6e6e" stroke-width="0.8"/>
    <path d="M1124.3 284 L1129.6 289.3 M1173 284 L1167.6 289.3 M1124.3 333 L1129.6 327.3 M1173 333 L1167.6 327.3" stroke="#6e6e6e" stroke-width="0.8"/>
    <path d="M1141 334.3 L1146 334.3 M1143 332 L1143.8 335" stroke="#111" stroke-width="1.3"/>
    </svg>
<div class="t" style="left:1143.06px;top:303.95px;font-size:11px;color:#fff;font-weight:700;transform:scaleX(1.0048);transform-origin:0 9.35px;">-X</div>
<svg class="a" style="left:490px;top:240px;" width="370" height="738" viewBox="490 240 370 738"><defs>
      <filter id="blur8" x="-30%" y="-30%" width="160%" height="160%"><feGaussianBlur stdDeviation="7"/></filter>
      <radialGradient id="boltg" cx="50%" cy="50%" r="50%"><stop offset="0" stop-color="#d0a800"/><stop offset="0.85" stop-color="#c9a000"/><stop offset="1" stop-color="#d8b000"/></radialGradient>
      <linearGradient id="panelg" x1="0" y1="0" x2="0" y2="1"><stop offset="0" stop-color="#25366a"/><stop offset="0.12" stop-color="#2a3c71"/><stop offset="1" stop-color="#2a3c71"/></linearGradient>
    </defs><rect x="560" y="240" width="270" height="738" fill="#7899c1"/><rect x="560" y="240" width="1" height="738" fill="#93b9ee"/><rect x="829" y="240" width="1.5" height="738" fill="#a8c8f2"/><rect x="576" y="442" width="238" height="384" fill="#34497a" opacity="0.7" filter="url(#blur8)"/><path d="M583.5 361 L583.5 427 M694.5 361 L694.5 427 M806.5 361 L806.5 427 M583.5 370 L806.5 370" stroke="#000" stroke-width="1.1" fill="none"/><rect x="588.3" y="368.3" width="4.4" height="3.4" fill="#000"/><rect x="685.8" y="368.3" width="4.4" height="3.4" fill="#000"/><rect x="699.3" y="368.3" width="4.4" height="3.4" fill="#000"/><rect x="797.3" y="368.3" width="4.4" height="3.4" fill="#000"/><rect x="639.1" y="351.1" width="18.7" height="18.7" fill="#c5ccd6"/><rect x="750" y="351.1" width="18.7" height="18.7" fill="#c5ccd6"/><path d="M502.3 502.3 L566 502.3 M502.3 630.5 L568 630.5 M502.3 757.6 L566 757.6 M510.3 503 L510.3 757" stroke="#000" stroke-width="1.2" fill="none"/><rect x="508.6" y="503.5" width="3.4" height="5" fill="#000"/><rect x="508.6" y="623.5" width="3.4" height="5" fill="#000"/><rect x="508.6" y="632.5" width="3.4" height="5" fill="#000"/><rect x="508.6" y="750.5" width="3.4" height="5" fill="#000"/><rect x="510.6" y="548.5" width="38.4" height="18.3" fill="#e6e6e6"/><rect x="510.6" y="676" width="38.4" height="18.3" fill="#e6e6e6"/><rect x="580" y="439" width="230" height="7.4" fill="#d2a800" stroke="#ffd400" stroke-width="1"/><rect x="580.5" y="440" width="229" height="1" fill="#283b70"/><rect x="580" y="464" width="1" height="7" fill="#ffd400"/><rect x="580" y="446.4" width="230" height="17.2" fill="#7899c1" stroke="#a9c7ef" stroke-width="1"/><rect x="580" y="464" width="230" height="7" fill="#6a5300"/><rect x="580" y="471" width="103.5" height="55" fill="url(#panelg)"/><rect x="707" y="471" width="103" height="55" fill="url(#panelg)"/><rect x="580" y="544" width="103.5" height="49" fill="url(#panelg)"/><rect x="707" y="544" width="103" height="49" fill="url(#panelg)"/><rect x="580" y="612" width="103.5" height="177" fill="url(#panelg)"/><rect x="707" y="612" width="103" height="177" fill="url(#panelg)"/><rect x="580" y="470" width="230" height="1.2" fill="#d2a800"/><rect x="580" y="470" width="230" height="1" fill="#ffd400"/><rect x="580" y="526" width="230" height="4.2" fill="#d2a800"/><rect x="580" y="526" width="230" height="1" fill="#ffd400"/><rect x="580" y="541" width="230" height="3" fill="#d2a800"/><rect x="580" y="541" width="230" height="1" fill="#ffd400"/><rect x="580" y="593" width="230" height="4.2" fill="#d2a800"/><rect x="580" y="593" width="230" height="1" fill="#ffd400"/><rect x="580" y="609" width="230" height="3" fill="#d2a800"/><rect x="580" y="609" width="230" height="1" fill="#ffd400"/><rect x="580" y="789" width="230" height="7" fill="#d2a800"/><rect x="580" y="789" width="230" height="1" fill="#ffd400"/><rect x="580" y="541" width="230" height="2" fill="#6a5300"/><rect x="580" y="609" width="230" height="2" fill="#6a5300"/><rect x="580" y="530.2" width="87" height="10.799999999999955" fill="#2d4584"/><rect x="667" y="530.2" width="56" height="10.799999999999955" fill="#283e7a"/><rect x="723" y="530.2" width="87" height="10.799999999999955" fill="#151c38"/><rect x="580" y="597.2" width="87" height="11.799999999999955" fill="#2d4584"/><rect x="667" y="597.2" width="56" height="11.799999999999955" fill="#283e7a"/><rect x="723" y="597.2" width="87" height="11.799999999999955" fill="#151c38"/><path d="M580 471.5 L683 471.5 L683 526 M707.5 526 L707.5 471.5 L810 471.5" stroke="#ffd400" stroke-width="1" fill="none"/><path d="M580 544.5 L683 544.5 L683 593 M707.5 593 L707.5 544.5 L810 544.5" stroke="#ffd400" stroke-width="1" fill="none"/><path d="M580 612.5 L683 612.5 L683 789 M707.5 789 L707.5 612.5 L810 612.5" stroke="#ffd400" stroke-width="1" fill="none"/><path d="M683 470 L689 464 L689 530.2 L683 526.2 Z" fill="#d2a800"/><path d="M701 464 L707.5 470 L707.5 526.2 L701 530.2 Z" fill="#6a5300"/><path d="M683.5 470 L683.5 526.2 M707 470 L707 526.2" stroke="#ffd400" stroke-width="1"/><path d="M683 547 L689 541 L689 597.2 L683 593.2 Z" fill="#d2a800"/><path d="M701 541 L707.5 547 L707.5 593.2 L701 597.2 Z" fill="#6a5300"/><path d="M683.5 547 L683.5 593.2 M707 547 L707 593.2" stroke="#ffd400" stroke-width="1"/><path d="M683 615 L689 609 L689 796 L683 792 Z" fill="#d2a800"/><path d="M701 609 L707.5 615 L707.5 792 L701 796 Z" fill="#6a5300"/><path d="M683.5 615 L683.5 792 M707 615 L707 792" stroke="#ffd400" stroke-width="1"/><rect x="580" y="796" width="230" height="17.7" fill="#7899c1" stroke="#a9c7ef" stroke-width="1"/><rect x="580" y="813.7" width="230" height="7" fill="#6a5300" stroke="#ffd400" stroke-width="1"/><rect x="689" y="455.3" width="12.2" height="350" fill="#7899c1" stroke="#a9c7ef" stroke-width="1"/><path d="M689 463.5 L701.2 463.5 M689 796 L701.2 796" stroke="#a9c7ef" stroke-width="1"/><circle cx="584" cy="502.6" r="19.8" fill="url(#boltg)" stroke="#ffd400" stroke-width="1.1"/><polygon points="584.00,482.80 601.15,492.70 601.15,512.50 584.00,522.40 566.85,512.50 566.85,492.70" fill="none" stroke="#ffd400" stroke-width="1"/><polygon points="584.00,484.60 599.59,493.60 599.59,511.60 584.00,520.60 568.41,511.60 568.41,493.60" fill="none" stroke="#ffd400" stroke-width="0.8" opacity="0.8"/><circle cx="650.4" cy="502.6" r="19.8" fill="url(#boltg)" stroke="#ffd400" stroke-width="1.1"/><polygon points="650.40,482.80 667.55,492.70 667.55,512.50 650.40,522.40 633.25,512.50 633.25,492.70" fill="none" stroke="#ffd400" stroke-width="1"/><polygon points="650.40,484.60 665.99,493.60 665.99,511.60 650.40,520.60 634.81,511.60 634.81,493.60" fill="none" stroke="#ffd400" stroke-width="0.8" opacity="0.8"/><circle cx="739.4" cy="502.6" r="19.8" fill="url(#boltg)" stroke="#ffd400" stroke-width="1.1"/><polygon points="739.40,482.80 756.55,492.70 756.55,512.50 739.40,522.40 722.25,512.50 722.25,492.70" fill="none" stroke="#ffd400" stroke-width="1"/><polygon points="739.40,484.60 754.99,493.60 754.99,511.60 739.40,520.60 723.81,511.60 723.81,493.60" fill="none" stroke="#ffd400" stroke-width="0.8" opacity="0.8"/><circle cx="806" cy="502.6" r="19.8" fill="url(#boltg)" stroke="#ffd400" stroke-width="1.1"/><polygon points="806.00,482.80 823.15,492.70 823.15,512.50 806.00,522.40 788.85,512.50 788.85,492.70" fill="none" stroke="#ffd400" stroke-width="1"/><polygon points="806.00,484.60 821.59,493.60 821.59,511.60 806.00,520.60 790.41,511.60 790.41,493.60" fill="none" stroke="#ffd400" stroke-width="0.8" opacity="0.8"/><circle cx="650.1" cy="569.4" r="19.8" fill="url(#boltg)" stroke="#ffd400" stroke-width="1.1"/><polygon points="650.10,549.60 667.25,559.50 667.25,579.30 650.10,589.20 632.95,579.30 632.95,559.50" fill="none" stroke="#ffd400" stroke-width="1"/><polygon points="650.10,551.40 665.69,560.40 665.69,578.40 650.10,587.40 634.51,578.40 634.51,560.40" fill="none" stroke="#ffd400" stroke-width="0.8" opacity="0.8"/><circle cx="739.4" cy="569.4" r="19.8" fill="url(#boltg)" stroke="#ffd400" stroke-width="1.1"/><polygon points="739.40,549.60 756.55,559.50 756.55,579.30 739.40,589.20 722.25,579.30 722.25,559.50" fill="none" stroke="#ffd400" stroke-width="1"/><polygon points="739.40,551.40 754.99,560.40 754.99,578.40 739.40,587.40 723.81,578.40 723.81,560.40" fill="none" stroke="#ffd400" stroke-width="0.8" opacity="0.8"/><circle cx="583.8" cy="757.9" r="19.8" fill="url(#boltg)" stroke="#ffd400" stroke-width="1.1"/><polygon points="583.80,738.10 600.95,748.00 600.95,767.80 583.80,777.70 566.65,767.80 566.65,748.00" fill="none" stroke="#ffd400" stroke-width="1"/><polygon points="583.80,739.90 599.39,748.90 599.39,766.90 583.80,775.90 568.21,766.90 568.21,748.90" fill="none" stroke="#ffd400" stroke-width="0.8" opacity="0.8"/><circle cx="650.3" cy="757.9" r="19.8" fill="url(#boltg)" stroke="#ffd400" stroke-width="1.1"/><polygon points="650.30,738.10 667.45,748.00 667.45,767.80 650.30,777.70 633.15,767.80 633.15,748.00" fill="none" stroke="#ffd400" stroke-width="1"/><polygon points="650.30,739.90 665.89,748.90 665.89,766.90 650.30,775.90 634.71,766.90 634.71,748.90" fill="none" stroke="#ffd400" stroke-width="0.8" opacity="0.8"/><circle cx="739.4" cy="757.9" r="19.8" fill="url(#boltg)" stroke="#ffd400" stroke-width="1.1"/><polygon points="739.40,738.10 756.55,748.00 756.55,767.80 739.40,777.70 722.25,767.80 722.25,748.00" fill="none" stroke="#ffd400" stroke-width="1"/><polygon points="739.40,739.90 754.99,748.90 754.99,766.90 739.40,775.90 723.81,766.90 723.81,748.90" fill="none" stroke="#ffd400" stroke-width="0.8" opacity="0.8"/><circle cx="805.8" cy="757.9" r="19.8" fill="url(#boltg)" stroke="#ffd400" stroke-width="1.1"/><polygon points="805.80,738.10 822.95,748.00 822.95,767.80 805.80,777.70 788.65,767.80 788.65,748.00" fill="none" stroke="#ffd400" stroke-width="1"/><polygon points="805.80,739.90 821.39,748.90 821.39,766.90 805.80,775.90 790.21,766.90 790.21,748.90" fill="none" stroke="#ffd400" stroke-width="0.8" opacity="0.8"/><rect x="579.5" y="608" width="16.5" height="23" fill="#fff"/><rect x="809" y="608" width="16.2" height="23" fill="#fff"/><rect x="560.4" y="820.6" width="15.4" height="23.4" fill="#fff"/><rect x="829.3" y="821" width="17" height="23" fill="#fff"/></svg>
<div class="t" style="left:642.40px;top:352.75px;font-size:15px;color:#111;transform:scaleX(1.0040);transform-origin:0 12.75px;">5"</div>
<div class="t" style="left:753.40px;top:352.75px;font-size:15px;color:#111;transform:scaleX(1.0040);transform-origin:0 12.75px;">5"</div>
<div class="t" style="left:511.88px;top:550.45px;font-size:15px;color:#111;transform:scaleX(1.0314);transform-origin:0 12.75px;">5"3/4</div>
<div class="t" style="left:511.88px;top:678.05px;font-size:15px;color:#111;transform:scaleX(1.0314);transform-origin:0 12.75px;">5"3/4</div>
<div class="t" style="left:581.58px;top:610.55px;font-size:17px;color:#000;transform:scaleX(1.0445);transform-origin:0 14.45px;">B</div>
<div class="t" style="left:811.44px;top:610.55px;font-size:17px;color:#000;">B</div>
<div class="t" style="left:561.61px;top:824.05px;font-size:17px;color:#000;transform:scaleX(1.0468);transform-origin:0 14.45px;">C</div>
<div class="t" style="left:830.90px;top:824.05px;font-size:17px;color:#000;transform:scaleX(0.9958);transform-origin:0 14.45px;">C</div>
<svg class="a" style="left:1022.4px;top:376.5px;" width="9" height="9" viewBox="1022.4 376.5 9 9"><path d="M1030.0 376.5 L1030.0 384.1 L1022.4 384.1 Z" fill="#3c3c3c"/></svg>
<div class="t" style="left:1044.72px;top:369.95px;font-size:15px;color:#3b3b3b;font-weight:700;transform:scaleX(0.9692);transform-origin:0 12.75px;">CON1</div>
<svg class="a" style="left:1047.4px;top:404.4px;" width="9" height="9" viewBox="1047.4 404.4 9 9"><path d="M1055.0 404.4 L1055.0 412.0 L1047.4 412.0 Z" fill="#3c3c3c"/></svg>
<div class="t" style="left:1069.61px;top:398.25px;font-size:15px;color:#3b3b3b;font-weight:700;transform:scaleX(1.0191);transform-origin:0 12.75px;">Members</div>
<svg class="a" style="left:1047.4px;top:488.4px;" width="9" height="9" viewBox="1047.4 488.4 9 9"><path d="M1055.0 488.4 L1055.0 496.0 L1047.4 496.0 Z" fill="#3c3c3c"/></svg>
<div class="t" style="left:1069.65px;top:482.25px;font-size:15px;color:#3b3b3b;font-weight:700;transform:scaleX(0.9761);transform-origin:0 12.75px;">Load effects</div>
<div class="a" style="left:1064px;top:534px;width:136px;height:27px;background:#f36f22;"></div>
<svg class="a" style="left:1047.4px;top:544.4px;" width="9" height="9" viewBox="1047.4 544.4 9 9"><path d="M1055.0 544.4 L1055.0 552.0 L1047.4 552.0 Z" fill="#3c3c3c"/></svg>
<div class="t" style="left:1069.81px;top:537.55px;font-size:15px;color:#fff;font-weight:700;transform:scaleX(0.9897);transform-origin:0 12.75px;">Operations [P]</div>
<div class="a" style="left:1070.2px;top:430.2px;width:13.6px;height:12.6px;background:#e3e3e3;border-radius:2px;"></div>
<svg class="a" style="left:1068px;top:426.2px;" width="22" height="20" viewBox="1068 426.2 22 20"><path d="M1073.2 437.0 L1076.6 440.8 L1085.8 428.8" fill="none" stroke="#ff8a1a" stroke-width="2.6"/></svg>
<div class="t" style="left:1096.25px;top:428.45px;font-size:15px;color:#3b3b3b;text-decoration:underline;text-underline-offset:2px;text-decoration-thickness:1px;">C</div>
<div class="a" style="left:1070.2px;top:458px;width:13.6px;height:12.6px;background:#e3e3e3;border-radius:2px;"></div>
<svg class="a" style="left:1068px;top:454px;" width="22" height="20" viewBox="1068 454 22 20"><path d="M1073.2 464.8 L1076.6 468.6 L1085.8 456.6" fill="none" stroke="#ff8a1a" stroke-width="2.6"/></svg>
<div class="t" style="left:1095.71px;top:457.05px;font-size:15px;color:#3b3b3b;transform:scaleX(1.0717);transform-origin:0 12.75px;">B</div>
<div class="a" style="left:1070.2px;top:514.4px;width:13.6px;height:12.6px;background:#e3e3e3;border-radius:2px;"></div>
<svg class="a" style="left:1068px;top:510.4px;" width="22" height="20" viewBox="1068 510.4 22 20"><path d="M1073.2 521.1999999999999 L1076.6 525.0 L1085.8 513.0" fill="none" stroke="#ff8a1a" stroke-width="2.6"/></svg>
<div class="t" style="left:1095.96px;top:513.25px;font-size:15px;color:#3b3b3b;transform:scaleX(0.8701);transform-origin:0 12.75px;">LE1</div>
<div class="a" style="left:1070.2px;top:570.3px;width:13.6px;height:12.6px;background:#e3e3e3;border-radius:2px;"></div>
<svg class="a" style="left:1068px;top:566.3px;" width="22" height="20" viewBox="1068 566.3 22 20"><path d="M1073.2 577.0999999999999 L1076.6 580.9 L1085.8 568.9" fill="none" stroke="#a6a6a6" stroke-width="2.6"/></svg>
<div class="t" style="left:1095.98px;top:569.45px;font-size:15px;color:#3b3b3b;transform:scaleX(0.8536);transform-origin:0 12.75px;">EP1</div>
<div class="a" style="left:1070.2px;top:598.3px;width:13.6px;height:12.6px;background:#e3e3e3;border-radius:2px;"></div>
<svg class="a" style="left:1068px;top:594.3px;" width="22" height="20" viewBox="1068 594.3 22 20"><path d="M1073.2 605.0999999999999 L1076.6 608.9 L1085.8 596.9" fill="none" stroke="#a6a6a6" stroke-width="2.6"/></svg>
<div class="t" style="left:1096.42px;top:597.45px;font-size:15px;color:#3b3b3b;transform:scaleX(0.8560);transform-origin:0 12.75px;">STIFF1</div>
<div class="a" style="left:1070.2px;top:626.3px;width:13.6px;height:12.6px;background:#e3e3e3;border-radius:2px;"></div>
<svg class="a" style="left:1068px;top:622.3px;" width="22" height="20" viewBox="1068 622.3 22 20"><path d="M1073.2 633.0999999999999 L1076.6 636.9 L1085.8 624.9" fill="none" stroke="#a6a6a6" stroke-width="2.6"/></svg>
<div class="t" style="left:1095.81px;top:625.45px;font-size:15px;color:#3b3b3b;transform:scaleX(0.9951);transform-origin:0 12.75px;">RIBMid2</div>
<div class="a" style="left:1070.2px;top:654.3px;width:13.6px;height:12.6px;background:#e3e3e3;border-radius:2px;"></div>
<svg class="a" style="left:1068px;top:650.3px;" width="22" height="20" viewBox="1068 650.3 22 20"><path d="M1073.2 661.0999999999999 L1076.6 664.9 L1085.8 652.9" fill="none" stroke="#a6a6a6" stroke-width="2.6"/></svg>
<div class="t" style="left:1095.87px;top:653.45px;font-size:15px;color:#3b3b3b;transform:scaleX(0.9406);transform-origin:0 12.75px;">RIBEnd2</div>
<div class="a" style="left:1070.2px;top:682.3px;width:13.6px;height:12.6px;background:#e3e3e3;border-radius:2px;"></div>
<svg class="a" style="left:1068px;top:678.3px;" width="22" height="20" viewBox="1068 678.3 22 20"><path d="M1073.2 689.0999999999999 L1076.6 692.9 L1085.8 680.9" fill="none" stroke="#a6a6a6" stroke-width="2.6"/></svg>
<div class="t" style="left:1096.30px;top:681.45px;font-size:15px;color:#3b3b3b;transform:scaleX(0.9353);transform-origin:0 12.75px;">GRD1</div>
<div class="a" style="left:1218px;top:200px;width:7px;height:778px;background:#c8c8c8;"></div>
<div class="a" style="left:1225px;top:200px;width:695px;height:31px;background:#f36f22;"></div>
<div class="t" style="left:1236.66px;top:209.15px;font-size:15px;color:#fff;font-weight:700;transform:scaleX(0.9808);transform-origin:0 12.75px;">Operations</div>
<div class="t" style="left:1734.50px;top:209.15px;font-size:15px;color:#fff;font-weight:700;transform:scaleX(0.9701);transform-origin:0 12.75px;">Weld sizing</div>
<div class="t" style="left:1839.77px;top:209.15px;font-size:15px;color:#fff;font-weight:700;transform:scaleX(0.9551);transform-origin:0 12.75px;">Explode</div>
<svg class="a" style="left:1246.5px;top:254.8px;" width="13" height="9" viewBox="1246.5 254.8 13 9"><path d="M1247.5 255.8 L1252.5 260.8 L1257.5 255.8" fill="none" stroke="#f36f22" stroke-width="1.5"/></svg>
<div class="t" style="left:1267.79px;top:251.35px;font-size:15px;color:#3b3b3b;font-weight:700;transform:scaleX(0.9863);transform-origin:0 12.75px;">Parameters</div>
<div class="t" style="left:1268.29px;top:282.00px;font-size:15px;color:#3b3b3b;transform:scaleX(0.9877);transform-origin:0 12.75px;">1. Gage (g) [in]</div>
<div class="t" style="left:1268.65px;top:313.05px;font-size:15px;color:#3b3b3b;">2. Type 0 for two bolts; Type 1 for four bolts; type 2 for six bolts</div>
<div class="t" style="left:1268.80px;top:344.05px;font-size:15px;color:#3b3b3b;transform:scaleX(0.9922);transform-origin:0 12.75px;">3. Stiffener between tension bolt rows?</div>
<div class="t" style="left:1269.10px;top:374.05px;font-size:15px;color:#3b3b3b;">4. Stiffener below tension bolt rows?</div>
<div class="t" style="left:1268.81px;top:404.15px;font-size:15px;color:#3b3b3b;transform:scaleX(0.9791);transform-origin:0 12.75px;">5. Stiffener thickness [in]</div>
<div class="t" style="left:1268.67px;top:434.65px;font-size:15px;color:#3b3b3b;transform:scaleX(0.9708);transform-origin:0 12.75px;">6. Column stiffener?</div>
<div class="t" style="left:1268.67px;top:464.85px;font-size:15px;color:#3b3b3b;transform:scaleX(0.9707);transform-origin:0 12.75px;">7. Four wide bolts?</div>
<div class="a" style="left:1700px;top:277px;width:205px;height:25px;background:#fff;box-sizing:border-box;border:1px solid #d6d6d6;"></div>
<div class="a" style="left:1700px;top:308px;width:205px;height:25px;background:#fff;box-sizing:border-box;border:1px solid #d6d6d6;"></div>
<div class="a" style="left:1700px;top:399px;width:205px;height:25px;background:#fff;box-sizing:border-box;border:1px solid #d6d6d6;"></div>
<div class="t" style="left:1704.50px;top:283.15px;font-size:15px;color:#111;">4"</div>
<div class="t" style="left:1704.70px;top:313.85px;font-size:15px;color:#111;transform:scaleX(0.7969);transform-origin:0 12.75px;">1</div>
<div class="t" style="left:1704.38px;top:404.85px;font-size:15px;color:#111;transform:scaleX(1.0856);transform-origin:0 12.75px;">1/2</div>
<div class="a" style="left:1700px;top:343px;width:15px;height:15px;background:#fff;box-sizing:border-box;border:1px solid #d9d9d9;"></div>
<svg class="a" style="left:1700px;top:343px;" width="15" height="15" viewBox="1700 343 15 15"><path d="M1703.4 350.4 L1706.6 353.4 L1712 347.6" fill="none" stroke="#f36f22" stroke-width="1.8"/></svg>
<div class="a" style="left:1700px;top:373px;width:15px;height:15px;background:#fff;box-sizing:border-box;border:1px solid #d9d9d9;"></div>
<svg class="a" style="left:1700px;top:373px;" width="15" height="15" viewBox="1700 373 15 15"><path d="M1703.4 380.4 L1706.6 383.4 L1712 377.6" fill="none" stroke="#f36f22" stroke-width="1.8"/></svg>
<div class="a" style="left:1700px;top:434px;width:15px;height:15px;background:#fff;box-sizing:border-box;border:1px solid #d9d9d9;"></div>
<svg class="a" style="left:1700px;top:434px;" width="15" height="15" viewBox="1700 434 15 15"><path d="M1703.4 441.4 L1706.6 444.4 L1712 438.6" fill="none" stroke="#f36f22" stroke-width="1.8"/></svg>
<div class="a" style="left:1700px;top:464px;width:15px;height:15px;background:#fff;box-sizing:border-box;border:1px solid #d9d9d9;"></div>
<svg class="a" style="left:1700px;top:464px;" width="15" height="15" viewBox="1700 464 15 15"><path d="M1703.4 471.4 L1706.6 474.4 L1712 468.6" fill="none" stroke="#f36f22" stroke-width="1.8"/></svg>
<svg class="a" style="left:1246.2px;top:513px;" width="13" height="9" viewBox="1246.2 513 13 9"><path d="M1247.2 514 L1252.2 519 L1257.2 514" fill="none" stroke="#f36f22" stroke-width="1.5"/></svg>
<div class="t" style="left:1268.25px;top:509.15px;font-size:15px;color:#3b3b3b;font-weight:700;transform:scaleX(0.9856);transform-origin:0 12.75px;">Welds</div>
<div class="t" style="left:1268.17px;top:540.15px;font-size:15px;color:#3b3b3b;transform:scaleX(1.0133);transform-origin:0 12.75px;">Weld sizing method</div>
<div class="a" style="left:1415px;top:535px;width:490px;height:25px;background:#fff;box-sizing:border-box;border:1px solid #d6d6d6;"></div>
<div class="t" style="left:1422.61px;top:540.35px;font-size:15px;color:#111;transform:scaleX(0.9922);transform-origin:0 12.75px;">Full strength</div>
<svg class="a" style="left:1886px;top:543px;" width="14" height="9" viewBox="1886 543 14 9"><path d="M1888.2 545 L1893 549.8 L1897.8 545" fill="none" stroke="#222" stroke-width="1.6"/></svg>
<svg class="a" style="left:0px;top:978px;" width="1920" height="42" viewBox="0 978 1920 42"><defs><filter id="bs" x="0" y="978" width="1920" height="42" filterUnits="userSpaceOnUse" color-interpolation-filters="sRGB"><feTurbulence type="fractalNoise" baseFrequency="0.003 0.55" numOctaves="3" seed="7" result="n"/><feColorMatrix in="n" type="matrix" values="0.34 0 0 0 -0.11  0.34 0 0 0 -0.11  0.34 0 0 0 -0.11  0 0 0 0 1"/></filter><linearGradient id="bsg" x1="0" y1="0" x2="1" y2="0"><stop offset="0" stop-color="#000" stop-opacity="0.25"/><stop offset="0.5" stop-color="#fff" stop-opacity="0.05"/><stop offset="1" stop-color="#000" stop-opacity="0.25"/></linearGradient></defs><rect x="0" y="978" width="1920" height="42" fill="#111"/><rect x="0" y="978" width="1920" height="42" filter="url(#bs)"/><rect x="0" y="978" width="1920" height="42" fill="url(#bsg)"/></svg>
<div class="t" style="left:29.56px;top:993.25px;font-size:15px;color:#8d8d8d;font-weight:700;transform:scaleX(0.9621);transform-origin:0 12.75px;">Design code:</div>
<div class="t" style="left:124.63px;top:993.25px;font-size:15px;color:#fff;font-weight:700;">AISC - LRFD (2022)</div>
<div class="t" style="left:285.64px;top:993.25px;font-size:15px;color:#8d8d8d;font-weight:700;transform:scaleX(0.9480);transform-origin:0 12.75px;">Analysis:</div>
<div class="t" style="left:353.07px;top:993.25px;font-size:15px;color:#fff;font-weight:700;transform:scaleX(0.9608);transform-origin:0 12.75px;">Stress, strain</div>
<div class="t" style="left:468.04px;top:993.25px;font-size:15px;color:#8d8d8d;font-weight:700;transform:scaleX(0.9846);transform-origin:0 12.75px;">Load effects:</div>
<div class="t" style="left:564.01px;top:993.25px;font-size:15px;color:#fff;font-weight:700;transform:scaleX(1.0109);transform-origin:0 12.75px;">In equilibrium</div>
<div class="t" style="left:687.60px;top:993.25px;font-size:15px;color:#8d8d8d;font-weight:700;">Units:</div>
<div class="t" style="left:737.30px;top:993.25px;font-size:15px;color:#fff;font-weight:700;transform:scaleX(1.1404);transform-origin:0 12.75px;">in</div>
<div class="t" style="left:1766.25px;top:992.85px;font-size:15px;color:#f36f22;">www.<span style="color:#e8e8e8">ideastatica</span>.com</div>
</body></html>
